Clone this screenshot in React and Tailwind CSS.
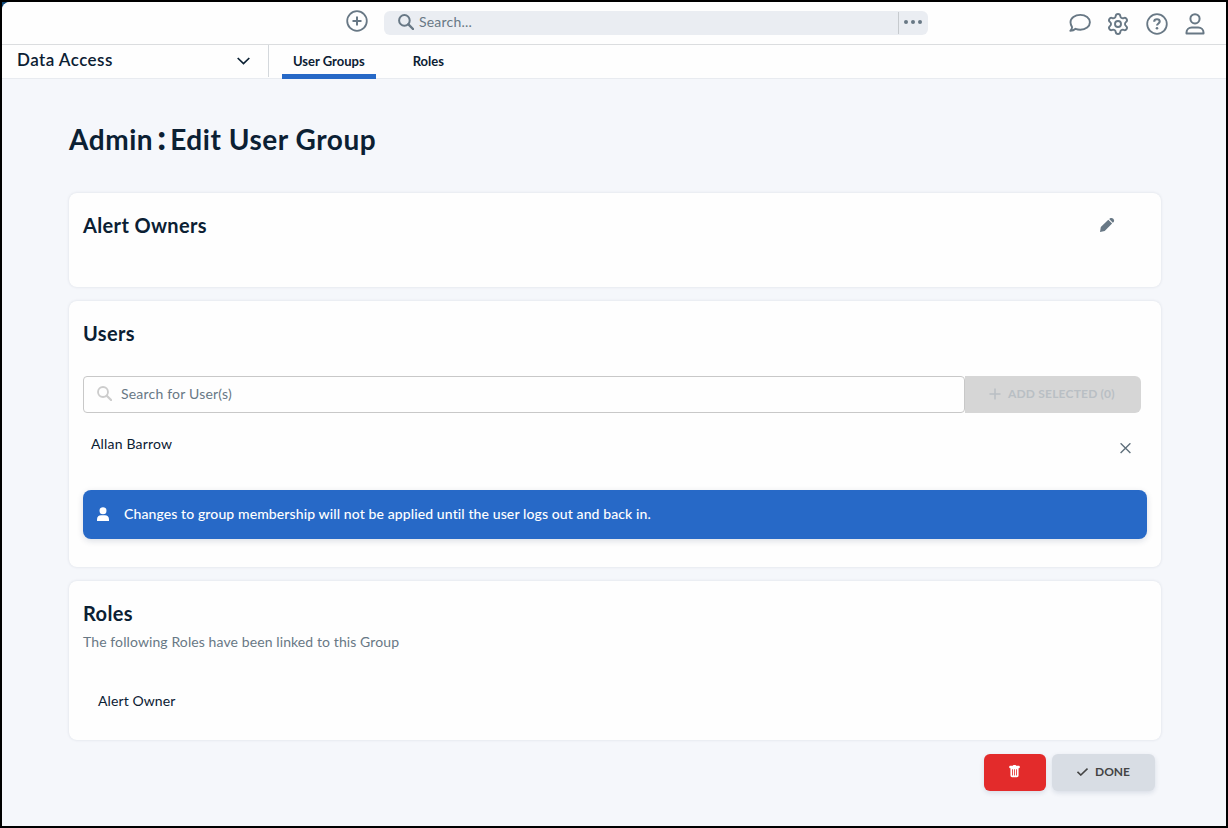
import { Settings } from 'lucide-react';
import { BsTrashFill } from 'react-icons/bs';

const tabs = [
  { name: 'User Groups', active: true },
  { name: 'Roles', active: false },
];

const users = ['Allan Barrow'];
const roles = ['Alert Owner'];

function SearchIcon({ className }) {
  return (
    <svg viewBox="0 0 16 16" fill="none" stroke="currentColor" className={className}>
      <circle cx="6.4" cy="6.4" r="5.3" strokeWidth="2" />
      <path d="M10.4 10.4 15 15" strokeWidth="2.4" strokeLinecap="round" />
    </svg>
  );
}

function PlusCircleIcon() {
  return (
    <svg viewBox="0 0 22 22" fill="none" stroke="currentColor" className="size-[22px]">
      <circle cx="11" cy="11" r="9.8" strokeWidth="1.8" />
      <path d="M11 6.5v9M6.5 11h9" strokeWidth="2" />
    </svg>
  );
}

function ChatIcon() {
  return (
    <svg viewBox="0 0 22 20" fill="none" stroke="currentColor" strokeWidth="1.9" strokeLinejoin="round" className="-mr-px -mt-0.5 h-5 w-[22px]">
      <path d="M11.3 1.9c5.4 0 9.6 3.2 9.6 7.4s-4.2 7.4-9.6 7.4c-1.7 0-3.3-.3-4.7-.9-1.5 1.4-3.3 2-5.3 2 1.1-1.2 1.7-2.3 1.8-3.6C2.2 12.7 1.5 11.1 1.5 9.3c0-4.2 4.4-7.4 9.8-7.4Z" />
    </svg>
  );
}

function HelpIcon() {
  return (
    <svg viewBox="0 0 22 22" fill="none" stroke="currentColor" className="size-[22px]">
      <circle cx="11" cy="11" r="9.8" strokeWidth="1.8" />
      <path d="M8.2 8.7c0-1.5 1.2-2.4 2.8-2.4s2.7 1 2.7 2.3c0 1.9-2.7 1.9-2.7 4" strokeWidth="2.1" />
      <circle cx="11" cy="15.3" r="1.3" fill="currentColor" stroke="none" />
    </svg>
  );
}

function UserOutlineIcon() {
  return (
    <svg viewBox="0 0 20 22" fill="none" stroke="currentColor" strokeWidth="2" strokeLinejoin="round" className="h-[22px] w-5">
      <circle cx="10" cy="5.8" r="4.6" />
      <path d="M1.5 20.5v-.9c0-3 2.3-5 5.3-5h6.4c3 0 5.3 2 5.3 5v.9Z" />
    </svg>
  );
}

function PencilIcon() {
  return (
    <svg viewBox="0 0 16 16" fill="currentColor" className="size-4">
      <path d="M1 15l.8-4.9L9.3 2.8l3.8 3.8L5.700 14ZM10.200 2.100l.9-.8c2.100-1.500 5.200 1.500 3.600 3.600l-.9.8Z" />
    </svg>
  );
}

function Card({ title, className, children }) {
  return (
    <section className={`rounded-lg bg-[#fefefe] px-3.5 pt-[19px] shadow-[0_0_3px_rgba(30,50,80,0.13)] ${className}`}>
      <h2 className="whitespace-nowrap text-[20px] font-bold leading-[26px] tracking-[0.35px] text-[#0b2033]">{title}</h2>
      {children}
    </section>
  );
}

function TopBar() {
  return (
    <header className="flex h-[43px] shrink-0 border-b border-[#dbdddf] text-[#687885]">
      <div className="flex w-full items-start pl-[344px] pr-[21px]">
        <button className="mt-2"><PlusCircleIcon /></button>
        <div className="ml-4 mt-[9px] flex h-6 w-[544px] items-center rounded-md bg-[#eaedf2]">
          <SearchIcon className="-mt-0.5 ml-3.5 size-4" />
          <span className="-mt-0.5 ml-[5px] flex-1 text-[14px] leading-5 tracking-[0.2px]">Search...</span>
          <button className="flex h-[22px] w-[30px] items-center gap-[3px] border-l border-[#c6cace] pb-0.5 pl-[5px]">
            <span className="size-1 rounded-full bg-[#687885]" />
            <span className="size-1 rounded-full bg-[#687885]" />
            <span className="size-1 rounded-full bg-[#687885]" />
          </button>
        </div>
        <div className="ml-auto mt-[11px] flex items-center gap-[17px]">
          <ChatIcon />
          <Settings className="-m-px size-6" strokeWidth={1.9} />
          <HelpIcon />
          <UserOutlineIcon />
        </div>
      </div>
    </header>
  );
}

function SubNav() {
  return (
    <nav className="flex h-[34px] shrink-0 items-start border-b border-[#e8ebf0] text-[#0b2033]">
      <div className="flex h-8 w-[267px] items-center border-r border-[#d4d8dc] pl-[15px] pr-[18px]">
        <span className="-mt-0.5 flex-1 text-[17px] font-semibold leading-6 tracking-[0.45px]">Data Access</span>
        <svg viewBox="0 0 13 8" fill="none" stroke="currentColor" strokeWidth="1.7" className="h-2 w-[13px]">
          <path d="M.7 1l5.8 5.6L12.3 1" />
        </svg>
      </div>
      <div className="ml-[13px] flex gap-[26px]">
        {tabs.map((tab) => (
          <button
            key={tab.name}
            className={
              tab.active
                ? 'h-[34px] whitespace-nowrap border-b-[5px] border-[#2769c7] px-[11px] text-[13px] font-bold leading-8'
                : 'h-[34px] whitespace-nowrap border-b-[5px] border-transparent px-[11px] text-[13px] font-bold leading-8'
            }
          >
            {tab.name}
          </button>
        ))}
      </div>
    </nav>
  );
}

export default function App() {
  return (
    <div className="h-[828px] w-[1228px] border-2 border-black bg-[#124a78] font-['Lato',sans-serif] text-[#0b2033]">
      <div className="flex h-full flex-col overflow-hidden rounded-tl-lg bg-[#f5f7fb]">
        <div className="bg-[#fefefe]">
          <TopBar />
          <SubNav />
        </div>

        <main className="flex w-[1159px] flex-col pl-[67px] pt-[41px]">
          <h1 className="mb-8 flex h-[41px] whitespace-nowrap text-[28px] font-bold leading-[38px] tracking-[0.55px]">
            Admin
            <span className="w-[17px] text-center text-[34px] font-black leading-[34px] tracking-normal">:</span>
            Edit User Group
          </h1>

          <div className="flex flex-col gap-3.5">
            <Card title="Alert Owners" className="h-[94px]">
              <div className="-mt-[26px] flex justify-end pr-8 pt-[5px] text-[#687885]">
                <PencilIcon />
              </div>
            </Card>

            <Card title="Users" className="h-[266px]">
              <div className="mt-[30px] flex h-[37px] w-[1058px]">
                <div className="flex w-[882px] items-center rounded border border-[#c8c8c8] pb-0.5 pl-[13px]">
                  <SearchIcon className="size-[15px] text-[#cccccc]" />
                  <span className="ml-[9px] text-[14px] tracking-[0.2px] text-[#687885]">Search for User(s)</span>
                </div>
                <button className="flex flex-1 items-center rounded-r-md bg-[#d6d6d6] pb-0.5 pl-6 text-[#b9bfc4]">
                  <svg viewBox="0 0 12 12" fill="none" stroke="currentColor" strokeWidth="1.5" className="size-3">
                    <path d="M6 .5v11M.5 6h11" />
                  </svg>
                  <span className="ml-[7px] whitespace-nowrap text-[12px] font-bold tracking-[0.2px]">ADD SELECTED (0)</span>
                </button>
              </div>

              {users.map((user) => (
                <div key={user} className="mt-[21px] flex h-7 justify-between pl-2 pr-4">
                  <span className="text-[14px] leading-5 tracking-[0.17px]">{user}</span>
                  <svg viewBox="0 0 11 11" fill="none" stroke="currentColor" strokeWidth="1.4" className="mt-[9px] size-[11px] text-[#5f6f7b]">
                    <path d="M.6.3l9.8 9.8M10.4.3L.6 10.1" />
                  </svg>
                </div>
              ))}

              <div className="mt-7 flex h-[49px] items-center rounded-lg bg-[#2769c7] pb-0.5 pl-3.5 text-white shadow-[0_2px_6px_rgba(20,40,80,0.15)]">
                <svg viewBox="0 0 12 14" fill="currentColor" className="h-3.5 w-3">
                  <circle cx="6" cy="3.7" r="3.5" />
                  <path d="M0 14v-1.8C0 9.8 1.800 8.300 4 8.300h4c2.200 0 4 1.500 4 3.900V14Z" />
                </svg>
                <span className="ml-[15px] whitespace-nowrap text-[14px] font-medium tracking-[0.11px]">
                  Changes to group membership will not be applied until the user logs out and back in.
                </span>
              </div>
            </Card>

            <Card title="Roles" className="h-[159px]">
              <p className="mt-1.5 whitespace-nowrap text-[14px] leading-5 tracking-[0.1px] text-[#687885]">
                The following Roles have been linked to this Group
              </p>
              <ul className="mt-[39px] pl-[15px]">
                {roles.map((role) => (
                  <li key={role} className="text-[14px] leading-5 tracking-[0.1px]">{role}</li>
                ))}
              </ul>
            </Card>
          </div>

          <div className="mt-3.5 flex justify-end gap-1.5 pr-1.5">
            <button className="flex h-[37px] w-[62px] items-center rounded-md bg-[#e32b2b] pb-0.5 pl-6 text-white shadow-[0_2px_5px_rgba(20,40,80,0.12)]">
              <BsTrashFill className="size-[13px]" />
            </button>
            <button className="flex h-[37px] w-[103px] items-center rounded-md bg-[#d8dde4] pb-0.5 pl-[25px] text-[#444444] shadow-[0_2px_5px_rgba(20,40,80,0.12)]">
              <svg viewBox="0 0 11 8" fill="none" stroke="currentColor" strokeWidth="1.6" className="h-2 w-[11px]">
                <path d="M.5 3.8L3.8 7 10.5.6" />
              </svg>
              <span className="ml-[7px] text-[12px] font-bold">DONE</span>
            </button>
          </div>
        </main>
      </div>
    </div>
  );
}
